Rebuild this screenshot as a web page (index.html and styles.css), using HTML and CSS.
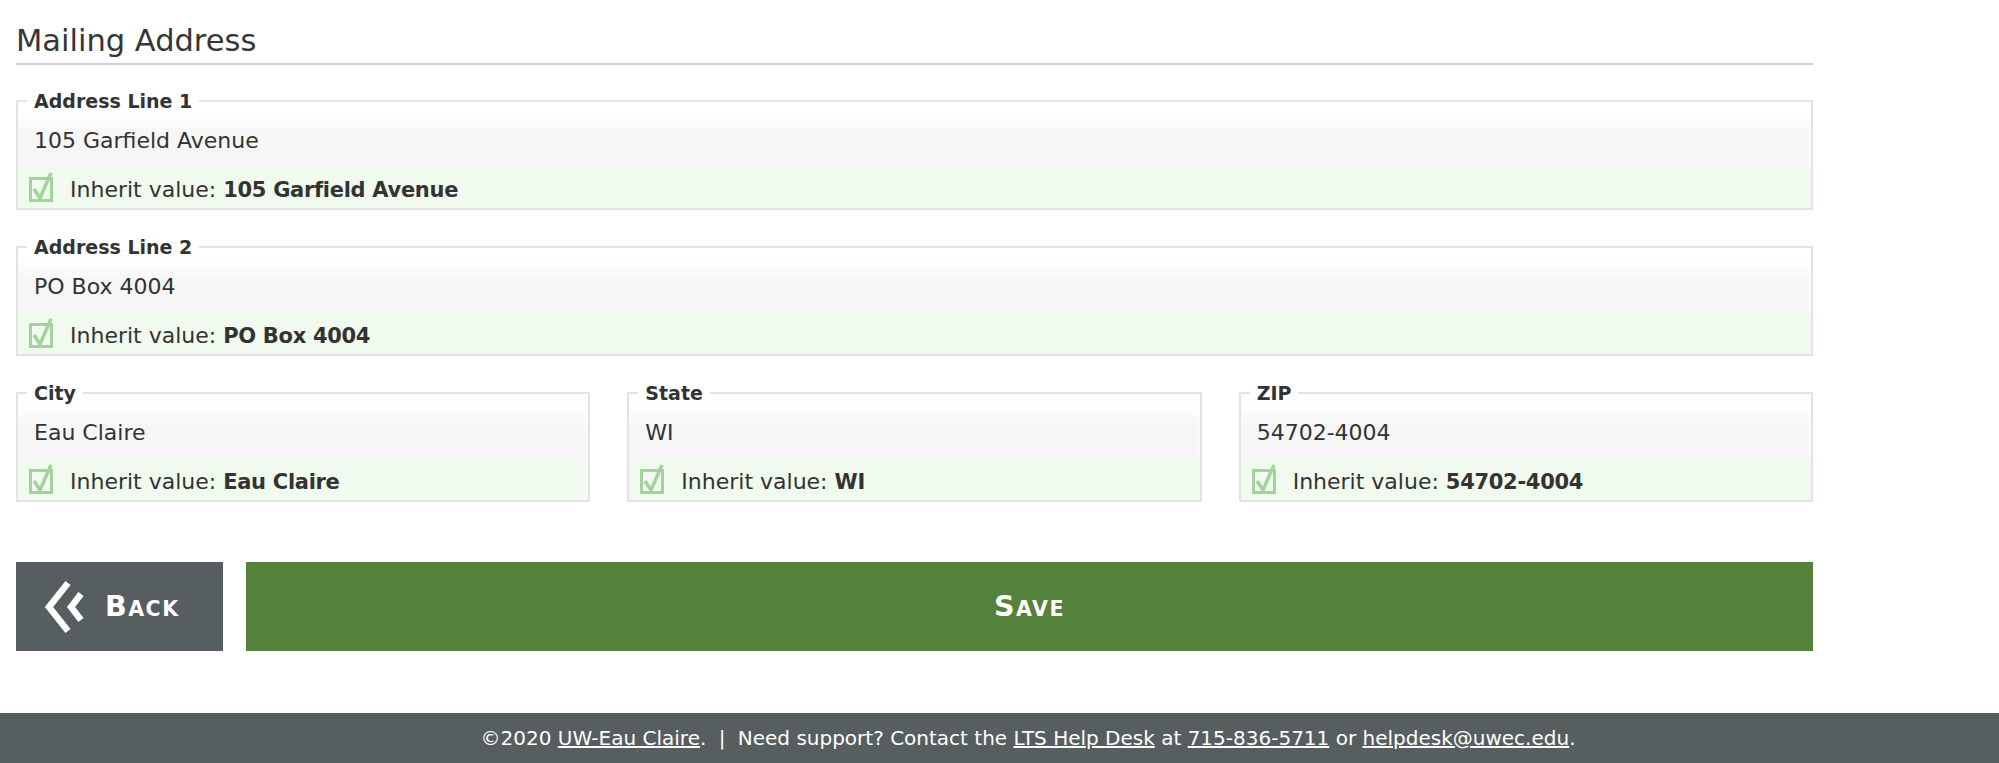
FILE: index.html
```html
<html>
  <head>
    <title>Mailing Address</title>
    <meta name="viewport" content="width=device-width, initial-scale=1.0">
    <link rel="stylesheet" href="styles.css">
  </head>

  <body>
    <main class="page">
      <h2 class="section-title">Mailing Address</h2>

      <fieldset class="field">
        <legend>Address Line 1</legend>
        <input class="field-input" type="text" value="105 Garfield Avenue">
        <label class="inherit">
          <svg class="check" viewBox="0 0 24 30" width="24" height="30"><rect x="1.5" y="6.5" width="21" height="22" fill="none" stroke="#a3d29d" stroke-width="3"/><path d="M5 17 L11 26 L22 1" fill="none" stroke="#a3d29d" stroke-width="3.5"/></svg>
          <span>Inherit value: <b>105 Garfield Avenue</b></span>
        </label>
      </fieldset>

      <fieldset class="field">
        <legend>Address Line 2</legend>
        <input class="field-input" type="text" value="PO Box 4004">
        <label class="inherit">
          <svg class="check" viewBox="0 0 24 30" width="24" height="30"><rect x="1.5" y="6.5" width="21" height="22" fill="none" stroke="#a3d29d" stroke-width="3"/><path d="M5 17 L11 26 L22 1" fill="none" stroke="#a3d29d" stroke-width="3.5"/></svg>
          <span>Inherit value: <b>PO Box 4004</b></span>
        </label>
      </fieldset>

      <div class="field-row">
        <fieldset class="field">
          <legend>City</legend>
          <input class="field-input" type="text" value="Eau Claire">
          <label class="inherit">
            <svg class="check" viewBox="0 0 24 30" width="24" height="30"><rect x="1.5" y="6.5" width="21" height="22" fill="none" stroke="#a3d29d" stroke-width="3"/><path d="M5 17 L11 26 L22 1" fill="none" stroke="#a3d29d" stroke-width="3.5"/></svg>
            <span>Inherit value: <b>Eau Claire</b></span>
          </label>
        </fieldset>
        <fieldset class="field">
          <legend>State</legend>
          <input class="field-input" type="text" value="WI">
          <label class="inherit">
            <svg class="check" viewBox="0 0 24 30" width="24" height="30"><rect x="1.5" y="6.5" width="21" height="22" fill="none" stroke="#a3d29d" stroke-width="3"/><path d="M5 17 L11 26 L22 1" fill="none" stroke="#a3d29d" stroke-width="3.5"/></svg>
            <span>Inherit value: <b>WI</b></span>
          </label>
        </fieldset>
        <fieldset class="field">
          <legend>ZIP</legend>
          <input class="field-input" type="text" value="54702-4004">
          <label class="inherit">
            <svg class="check" viewBox="0 0 24 30" width="24" height="30"><rect x="1.5" y="6.5" width="21" height="22" fill="none" stroke="#a3d29d" stroke-width="3"/><path d="M5 17 L11 26 L22 1" fill="none" stroke="#a3d29d" stroke-width="3.5"/></svg>
            <span>Inherit value: <b>54702-4004</b></span>
          </label>
        </fieldset>
      </div>

      <div class="actions">
        <button class="btn btn-back">
          <svg class="back-icon" viewBox="0 0 40 54" width="40" height="54"><polyline points="24,3 5,27 24,51" fill="none" stroke="#fff" stroke-width="6.5"/><polyline points="37,14 27,27 37,40" fill="none" stroke="#fff" stroke-width="6.5"/></svg>
          <span class="btn-label">Back</span>
        </button>
        <button class="btn btn-save"><span class="btn-label">Save</span></button>
      </div>
    </main>

    <footer class="site-footer">
      <p>&copy;2020 <a href="#">UW-Eau Claire</a>. <span class="sep">|</span> Need support? Contact the <a href="#">LTS Help Desk</a> at <a href="#">715-836-5711</a> or <a href="#">helpdesk@uwec.edu</a>.</p>
    </footer>
  </body>
</html>
```

FILE: styles.css
```css
*{
  margin: 0px;
  box-sizing: border-box;
}

body{
  font-family: "DejaVu Sans", "Liberation Sans", sans-serif;
  color: #333333;
  background-color: white;
}

.page{
  width: 1797px;
  margin-left: 16px;
  padding-top: 24px;
}

.section-title{
  font-size: 30.5px;
  line-height: 34px;
  font-weight: 400;
  color: #363636;
  padding-bottom: 5px;
  border-bottom: 2px solid #d0d0d0;
  margin-bottom: 25px;
}

.field{
  border: 2px solid #e3e3e3;
  padding: 0px;
  margin: 0px 0px 26px 0px;
  min-width: 0;
}

.field legend{
  font-size: 19px;
  line-height: 22px;
  font-weight: 700;
  color: #333333;
  margin-left: 9px;
  padding: 0px 7px;
}

.field-input{
  display: block;
  width: 100%;
  height: 56px;
  border: none;
  outline: none;
  padding: 0px 16px;
  font-family: inherit;
  font-size: 22px;
  color: #333333;
  background: linear-gradient(to bottom, #ffffff 0px, #f6f6f6 22px);
  box-shadow: inset -8px 0px 8px -8px #ffffff;
}

.inherit{
  display: flex;
  align-items: center;
  height: 40px;
  padding: 3px 0px 0px 11px;
  gap: 17px;
  background-color: #f0faee;
  font-size: 22px;
  color: #333333;
}

.inherit .check{
  flex: none;
  margin-top: -6px;
}

.inherit b{
  font-size: 21px;
  letter-spacing: -0.3px;
  font-weight: 700;
}

.field-row{
  display: grid;
  grid-template-columns: 1fr 1fr 1fr;
  gap: 37px;
}

.field-row .field{
  margin-bottom: 0px;
}

.actions{
  display: flex;
  gap: 23px;
  margin-top: 60px;
}

.btn{
  height: 89px;
  border: none;
  outline: none;
  color: white;
  font-family: inherit;
  font-weight: 700;
  cursor: pointer;
}

.btn-label{
  display: block;
  font-size: 20.5px;
  text-transform: uppercase;
  letter-spacing: 1.5px;
}

.btn-label::first-letter{
  font-size: 28.5px;
}

.btn-back{
  width: 207px;
  display: flex;
  align-items: center;
  gap: 21px;
  padding-left: 28px;
  background-color: #575e60;
}

.btn-back:hover{
  background-color: #474d4f;
}

.back-icon{
  flex: none;
}

.btn-save{
  flex: 1;
  background-color: #55823a;
}

.btn-save:hover{
  background-color: #4a7332;
}

.site-footer{
  margin-top: 62px;
  height: 50px;
  background-color: #575e60;
  color: white;
  display: flex;
  align-items: center;
  justify-content: center;
  padding-left: 57px;
  font-size: 20px;
}

.site-footer a{
  color: white;
}

.site-footer .sep{
  padding: 0px 6px;
}
```
